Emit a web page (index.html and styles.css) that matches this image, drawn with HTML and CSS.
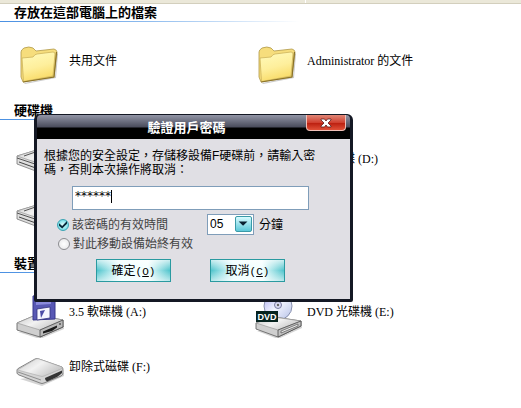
FILE: index.html
```html
<!DOCTYPE html>
<html lang="zh-Hant">
<head>
    <meta charset="UTF-8">
    <meta name="viewport" content="width=device-width, initial-scale=1.0">
    <title>我的電腦</title>
    <link rel="stylesheet" href="styles.css">
</head>
<body>
    <!-- shared icon shapes -->
    <svg class="defs" width="0" height="0" aria-hidden="true">
        <defs>
            <linearGradient id="folder-front" x1="0.3" y1="0" x2="0.6" y2="1">
                <stop offset="0" stop-color="#fff9b8"/>
                <stop offset="0.5" stop-color="#feef9c"/>
                <stop offset="1" stop-color="#f8d860"/>
            </linearGradient>
            <linearGradient id="metal" x1="0" y1="0" x2="1" y2="0.6">
                <stop offset="0" stop-color="#c8c8c8"/>
                <stop offset="0.5" stop-color="#f2f2f2"/>
                <stop offset="1" stop-color="#c4c4c4"/>
            </linearGradient>
            <linearGradient id="disc" x1="0" y1="0" x2="1" y2="1">
                <stop offset="0" stop-color="#a9a9ee"/>
                <stop offset="0.5" stop-color="#f2f4ff"/>
                <stop offset="1" stop-color="#b4c0e6"/>
            </linearGradient>
            <symbol id="folder" viewBox="0 0 48 48">
                <path d="M8 44 L39 38 L41 14 L42 15 L40 39 L9 45Z" fill="#999" opacity="0.5"/>
                <path d="M5 13 Q5 11 8 9 Q13 7 17 9 L20 12 L38 10 Q41 11 41 13 L38 38 L7 43 L5 38Z" fill="#f6dd7c" stroke="#b09848" stroke-width="0.8"/>
                <path d="M6 19 L17 18 Q19 15 21 15 L37 13 Q39 13 39 15 L37 37 L7.5 42.5Z" fill="url(#folder-front)" stroke="#cdb45c" stroke-width="0.8"/>
                <path d="M40.5 13 L38 38 L7 43" fill="none" stroke="#8a7228" stroke-width="1.2"/>
            </symbol>
            <symbol id="disk" viewBox="0 0 48 48">
                <path d="M1 19 L24 12 L47 19 V26 L25 36 L1 27Z" fill="#dedede" stroke="#777" stroke-width="0.8"/>
                <path d="M1 19 L24 12 L47 19 L25 27Z" fill="url(#metal)" stroke="#999" stroke-width="0.7"/>
                <path d="M1 21 L25 29 L47 20.5" fill="none" stroke="#555" stroke-width="1"/>
                <path d="M3 25 L24 32.5" fill="none" stroke="#444" stroke-width="1"/>
                <path d="M8 19 L18 15.5" stroke="#555" stroke-width="1"/>
            </symbol>
            <symbol id="floppy" viewBox="0 0 48 48">
                <path d="M2 42 L24 49 L48 39 V36Z" fill="#aaa" opacity="0.5"/>
                <path d="M1 33 L20 25 L47 30 V37 L24 47 L1 40Z" fill="#cfcfcf" stroke="#6a6a6a" stroke-width="0.9"/>
                <path d="M1 33 L20 25 L47 30 L24 40Z" fill="url(#metal)" stroke="#999" stroke-width="0.7"/>
                <path d="M24 40 L47 30 V37 L24 47Z" fill="#b9b9b9" stroke="#4a4a4a" stroke-width="0.8"/>
                <path d="M27 41.5 L41 35.5 V37.5 L36 41 L27 43.5Z" fill="#1b1b1b"/>
                <path d="M17 6 L37 3 L39 5 V29 L17 30Z" fill="#5858b4" stroke="#36368c" stroke-width="1"/>
                <path d="M20 6 H35 V14 L20 15Z" fill="#8b8bdd"/>
                <path d="M21 19 L34 17 V28 L21 30Z" fill="#f6f6ff" stroke="#32327d" stroke-width="0.8"/>
                <path d="M24 21 L29 20 L25 28Z" fill="#4c4ca6"/>
                <circle cx="44" cy="34" r="1" fill="#555"/>
            </symbol>
            <symbol id="dvd" viewBox="0 0 48 48">
                <circle cx="24" cy="16" r="14" fill="url(#disc)" stroke="#8890ae" stroke-width="1"/>
                <circle cx="24" cy="15" r="3.5" fill="#dcdcf4" stroke="#777aa0" stroke-width="1"/>
                <circle cx="24" cy="15" r="1.2" fill="#666"/>
                <path d="M3 41 L24 49 L48 38 V36Z" fill="#aaa" opacity="0.5"/>
                <path d="M2 33 L20 27 L47 31 V36 L24 47 L2 39Z" fill="#cfcfcf" stroke="#6a6a6a" stroke-width="0.9"/>
                <path d="M2 33 L20 27 L47 31 L24 40Z" fill="url(#metal)" stroke="#999" stroke-width="0.7"/>
                <path d="M24 40 L47 31 V36 L24 47Z" fill="#c2c2c2" stroke="#4a4a4a" stroke-width="0.8"/>
                <path d="M27 41 L44 34 V36 L27 43Z" fill="#eee" stroke="#555" stroke-width="0.7"/>
                <rect x="2" y="21" width="22" height="11" fill="#06231f"/>
                <text x="13" y="30" class="disc-label">DVD</text>
            </symbol>
            <symbol id="removable" viewBox="0 0 48 48">
                <path d="M4 34 L26 41 L48 31 V28Z" fill="#aaa" opacity="0.5"/>
                <path d="M1 25 Q1 24 3 23 L19 14 Q21 13 23 14 L46 22 Q47 23 47 25 V28 Q47 30 45 31 L28 38 Q26 39 24 38 L3 30 Q1 29 1 28Z" fill="#d4d4d4" stroke="#777" stroke-width="0.9"/>
                <path d="M1.5 25 L20 14 Q21 13.5 23 14 L46 22 Q47 23 45 24 L28 31 Q26 32 24 31Z" fill="url(#metal)" stroke="#aaa" stroke-width="0.6"/>
                <path d="M2 27 L25 35" stroke="#888" stroke-width="0.9"/>
                <path d="M29 33 L46 25.5 V28 Q44 30 41 32 L31 36.5 Q29 36 29 33Z" fill="#353535"/>
            </symbol>
        </defs>
    </svg>

    <div class="header-bar">
        <span class="header-col"></span>
        <span class="header-col"></span>
    </div>

    <main class="explorer">
        <section class="group">
            <h2>存放在這部電腦上的檔案</h2>
            <ul class="items">
                <li><svg class="icon"><use href="#folder"/></svg><span>共用文件</span></li>
                <li><svg class="icon"><use href="#folder"/></svg><span>Administrator 的文件</span></li>
            </ul>
        </section>

        <section class="group">
            <h2>硬碟機</h2>
            <ul class="items">
                <li><svg class="icon"><use href="#disk"/></svg></li>
                <li><svg class="icon"><use href="#disk"/></svg><span>本機磁碟 (D:)</span></li>
                <li><svg class="icon"><use href="#disk"/></svg></li>
            </ul>
        </section>

        <section class="group">
            <h2>裝置</h2>
            <ul class="items">
                <li><svg class="icon"><use href="#floppy"/></svg><span>3.5 軟碟機 (A:)</span></li>
                <li><svg class="icon"><use href="#dvd"/></svg><span>DVD 光碟機 (E:)</span></li>
                <li><svg class="icon"><use href="#removable"/></svg><span>卸除式磁碟 (F:)</span></li>
            </ul>
        </section>
    </main>

    <div class="dialog" role="dialog" aria-labelledby="dialog-title">
        <div class="title-bar">
            <h1 id="dialog-title">驗證用戶密碼</h1>
            <button class="close" type="button" aria-label="關閉">
                <svg width="12" height="10" viewBox="0 0 12 10">
                    <path d="M1 1H4.5L6 3L7.5 1H11V2L8 5L11 8V9H7.5L6 7L4.5 9H1V8L4 5L1 2Z" fill="#fff" stroke="#5c2020" stroke-width="0.8"/>
                </svg>
            </button>
        </div>
        <form class="dialog-body">
            <label class="message" for="password">根據您的安全設定，存儲移設備F硬碟前，請輸入密碼，否則本次操作將取消：</label>
            <div class="field">
                <input id="password" type="text" value="******" autocomplete="off">
                <span class="caret"></span>
            </div>
            <div class="option">
                <input id="timed" class="tick" type="checkbox" checked>
                <label for="timed">該密碼的有效時間</label>
                <div class="minutes">
                    <select id="minutes">
                        <option>05</option>
                        <option>10</option>
                        <option>30</option>
                    </select>
                    <svg class="arrow" width="17" height="16" viewBox="0 0 17 16">
                        <path d="M3 5H13L8 10Z" fill="#0a2030"/>
                    </svg>
                </div>
                <label class="unit" for="minutes">分鐘</label>
            </div>
            <div class="option always">
                <input id="always" class="dot" type="radio">
                <label for="always">對此移動設備始終有效</label>
            </div>
            <div class="buttons">
                <button type="button">確定<span class="key">(<u>O</u>)</span></button>
                <button type="button">取消<span class="key">(<u>C</u>)</span></button>
            </div>
        </form>
    </div>
</body>
</html>
```
FILE: styles.css
```css
* {
    box-sizing: border-box;
}
body {
    margin: 0;
    background: #fff;
    color: #000;
    font-family: "Liberation Serif", "Noto Sans CJK TC", serif;
    font-size: 12px;
    line-height: 14px;
}
.defs {
    position: absolute;
}
.header-bar {
    display: flex;
    height: 4px;
    background: #ebe8d9;
    border-bottom: 1px solid #d3cfbd;
}
.header-col:first-child {
    width: 306px;
    border-right: 1px solid #fff;
}
.group {
    padding-bottom: 12px;
}
.group h2 {
    margin: 0;
    padding: 1px 0 0 14px;
    height: 18px;
    font-family: "Liberation Sans", "Noto Sans CJK TC", sans-serif;
    font-size: 13px;
    line-height: 16px;
    background: linear-gradient(to right, #4a90e2, #8fbcee 150px, #fff 300px) left bottom / 100% 1px no-repeat;
}
.items {
    display: grid;
    grid-template-columns: 238px 1fr;
    grid-auto-rows: 55px;
    margin: 0;
    padding: 13px 0 0 16px;
    list-style: none;
}
.items li {
    display: flex;
    align-items: center;
    gap: 5px;
    white-space: nowrap;
}
.items span {
    padding-bottom: 3px;
}
.icon {
    flex: none;
    width: 48px;
    height: 48px;
}
.disc-label {
    fill: #fff;
    font-family: "Liberation Sans", sans-serif;
    font-size: 9px;
    font-weight: bold;
    text-anchor: middle;
}

/* password dialog */
.dialog {
    position: absolute;
    left: 34px;
    top: 114px;
    width: 319px;
    border: 3px solid #141824;
    border-top-width: 1px;
    border-radius: 6px 6px 2px 2px;
    background: #141824;
    font-family: "Liberation Sans", "Noto Sans CJK TC", sans-serif;
}
.title-bar {
    display: flex;
    height: 24px;
    padding: 0 4px 0 30px;
    border-radius: 4px 4px 0 0;
    background: linear-gradient(#9295a6, #4a4c5c 12px, #000 13px);
}
.title-bar h1 {
    flex: 1;
    margin: 0;
    padding-top: 5px;
    color: #fff;
    font-size: 13px;
    line-height: 16px;
    text-align: center;
}
.close {
    display: flex;
    align-items: center;
    justify-content: center;
    width: 40px;
    height: 16px;
    padding: 0;
    border: 1px solid #f0c0b8;
    border-top: 0;
    border-radius: 0 0 4px 4px;
    background: linear-gradient(#e08878, #d04030 50%, #bc2010 55%, #e05038);
}
.dialog-body {
    padding: 10px 7px 17px;
    background: #e0dfe4;
}
.message {
    display: block;
    width: 276px;
}
.field {
    display: flex;
    align-items: center;
    height: 24px;
    margin: 9px 34px 4px 28px;
    padding: 0 2px 4px;
    border: 1px solid #7f9db9;
    background: #fff;
}
.field input {
    field-sizing: content;
    padding: 0;
    border: 0;
    outline: 0;
    background: none;
    font: 12px "DejaVu Sans", sans-serif;
}
.caret {
    width: 1px;
    height: 13px;
    background: #000;
}
.option {
    display: flex;
    align-items: center;
    height: 21px;
    padding-left: 13px;
    color: #444;
}
.always {
    height: 18px;
    padding-left: 14px;
}
.tick,
.dot {
    appearance: none;
    flex: none;
    width: 12px;
    height: 12px;
    margin: 0 3px 0 0;
    border: 1px solid #8c8c90;
    border-radius: 50%;
    background: radial-gradient(#fff, #e4e4e6);
}
.tick {
    border-color: #3aa4b4;
    background: radial-gradient(#e8ffff, #4cd0dc);
}
.tick::before {
    content: "";
    display: block;
    width: 8px;
    height: 8px;
    margin: 1px;
    background: #062838;
    clip-path: polygon(0 35%, 40% 68%, 100% 5%, 100% 40%, 40% 100%, 0 65%);
}
.minutes {
    position: relative;
    margin-left: 39px;
}
.minutes select {
    appearance: none;
    display: block;
    width: 47px;
    height: 21px;
    padding: 0 2px 2px;
    border: 1px solid #7f9db9;
    border-radius: 0;
    background: #fff;
    color: #000;
    font: 12px "Liberation Sans", sans-serif;
}
.arrow {
    position: absolute;
    top: 2px;
    right: 2px;
    border: 1px solid #3a9aa8;
    border-radius: 2px;
    background: linear-gradient(#d8fbff, #5cc8d8);
    pointer-events: none;
}
.unit {
    margin-left: 5px;
    color: #000;
}
.buttons {
    display: flex;
    gap: 39px;
    margin-top: 6px;
    padding-left: 52px;
}
.buttons button {
    width: 75px;
    height: 23px;
    padding: 0 0 3px;
    border: 1px solid #2a9aa0;
    background:
        linear-gradient(rgba(255, 255, 255, 0.7), rgba(255, 255, 255, 0) 50%, rgba(255, 255, 255, 0.6)),
        linear-gradient(to right, #4fc4cc, #e6fdff 30%, #f2ffff 70%, #4fc4cc);
    color: #000;
    font: 12px "Liberation Sans", "Noto Sans CJK TC", sans-serif;
}
.key {
    font-family: "Liberation Mono", monospace;
    font-size: 11px;
}
```
